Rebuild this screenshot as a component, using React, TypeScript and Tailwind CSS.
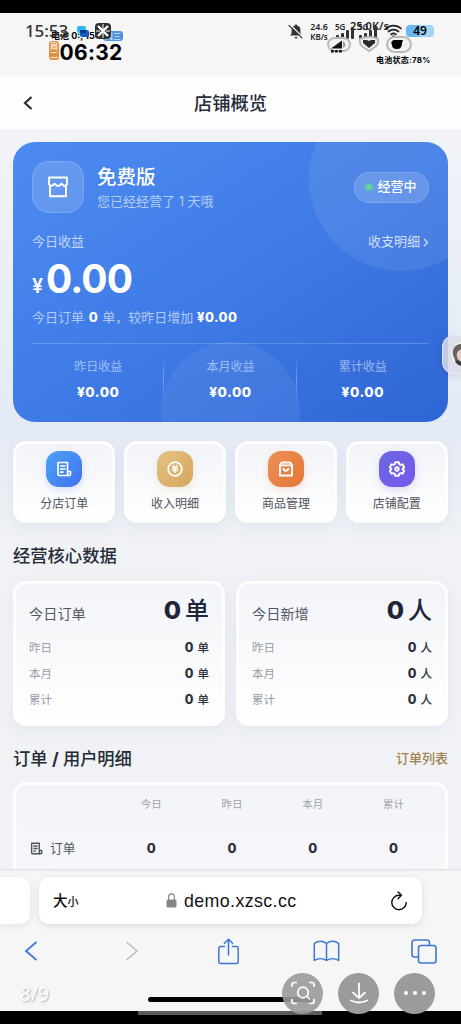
import React from "react";

const SOFT_CARD =
  "rounded-[13px] border-[3px] border-white/80 bg-gradient-to-b from-[#f2f4f8] to-white shadow-[0_4px_14px_rgba(120,140,190,0.10)]";

const NUMERAL = "font-extrabold";

function ReceiptIcon({ size }: { size: number }) {
  return (
    <svg width={size} height={size} viewBox="0 0 16 16" fill="none" stroke="currentColor" strokeWidth="1.7" strokeLinejoin="round">
      <path d="M2 1.500h9.500v13H3.200A1.200 1.200 0 0 1 2 13.300z" />
      <path d="M11.500 10.500h3v2.600a1.400 1.400 0 0 1-1.400 1.400H11" />
      <path d="M4 5h5.500M4 8h5.500M4 11.200h3.500" />
    </svg>
  );
}

function CoinIcon() {
  return (
    <svg width="16" height="16" viewBox="0 0 16 16" fill="none" stroke="currentColor" strokeWidth="1.700">
      <circle cx="8" cy="8" r="6.800" />
      <path d="M5.700 4.300L8 6.800l2.300-2.500M8 6.500v5.500M5 7.300h6M5 9.500h6" strokeWidth="1.500" />
    </svg>
  );
}

function BagIcon() {
  return (
    <svg width="16" height="16" viewBox="0 0 16 16" fill="none" stroke="currentColor" strokeWidth="1.900" strokeLinejoin="round">
      <path d="M3.800 1.500h8.400l1.800 2.500v10.500H2V4z" />
      <path d="M2.500 4.400h11M5.500 7a2.500 2.800 0 0 0 5 0" />
    </svg>
  );
}

function GearIcon() {
  return (
    <svg width="16" height="16" viewBox="0 0 16 16" fill="none" stroke="currentColor" strokeWidth="1.900" strokeLinejoin="round">
      <path d="M6.200 1.200h3.600l.5 2 1.200.7 2-.6 1.700 3-1.500 1.400v.6l1.500 1.400-1.700 3-2-.6-1.200.7-.5 2H6.200l-.5-2-1.200-.7-2 .6-1.700-3 1.500-1.400v-.6L.8 6.300l1.700-3 2 .6 1.200-.7z" />
      <circle cx="8" cy="8" r="1.700" />
    </svg>
  );
}

function StoreIcon() {
  return (
    <svg width="20" height="22" viewBox="0 0 20 22" fill="none" stroke="white" strokeWidth="1.900" strokeLinejoin="round">
      <path d="M1 1.500h18v6.800l-1.500 1.400h-2l-2-2-2 2h-3l-2-2-2 2h-2L1 8.300z" />
      <path d="M2 9.700v10.500h16V9.700" />
    </svg>
  );
}

function Signal() {
  return (
    <svg width="19" height="12" viewBox="0 0 19 12" fill="#333">
      <rect x="1" y="8" width="3" height="4" rx="1" />
      <rect x="6" y="6" width="3" height="6" rx="1" />
      <rect x="11" y="3" width="3" height="9" rx="1" />
      <rect x="16" y="0" width="3" height="12" rx="1" />
    </svg>
  );
}

function StatusBar() {
  return (
    <header className="relative h-[64px] shrink-0 bg-[#f6f6f7] text-black">
      <span className="absolute left-[51px] top-[17px] whitespace-nowrap text-[9px] font-bold leading-3">电池 0:, 15:</span>
      <span className="absolute left-[103px] top-[18px] flex h-[10px] w-[20px] items-center justify-center rounded-[3px] bg-[#4b93dc] text-[8px] text-white">周三</span>
      <span className="absolute left-[25px] top-[8px] font-['Noto_Sans','Noto_Sans_CJK_SC',sans-serif] text-[17px] font-medium leading-5 tracking-[-0.1px] text-[#333]">15:53</span>
      <svg className="absolute left-[77px] top-[13px]" width="12" height="12" viewBox="0 0 12 12">
        <rect x="0" y="0" width="9" height="7" rx="2" fill="#2db5f2" />
        <rect x="3" y="4" width="9" height="7" rx="2" fill="#1459c8" />
        <path d="M3 4h6v3H5a2 2 0 0 1-2-2z" fill="#083985" />
      </svg>
      <svg className="absolute left-[95px] top-[10px]" width="16" height="16" viewBox="0 0 16 16">
        <rect width="16" height="16" rx="4" fill="#303030" />
        <path d="M3 3l10 10M13 3L3 13" stroke="#fff" strokeWidth="2.400" />
        <path d="M8 1v5M8 15v-5M1 8h4M15 8h-4" stroke="#fff" strokeWidth="1" />
      </svg>
      <span className="absolute left-[49px] top-[28px] flex h-[19px] w-[10px] flex-col items-center justify-center rounded-[3px] bg-[#de9145] text-[8px] leading-[9px] text-white">
        <span>周</span>
        <span>二</span>
      </span>
      <span className="absolute left-[59.500px] top-[28px] text-[21px] font-bold leading-6 tracking-[0.300px]">06:32</span>

      <svg className="absolute left-[288px] top-[10px]" width="16" height="17" viewBox="0 0 16 17">
        <path d="M2 12.500l1.600-2V7a4.500 4.500 0 0 1 3.200-4.400 1.200 1.200 0 0 1 2.400 0A4.500 4.500 0 0 1 12.400 7v3.500l1.600 2zM6.500 14h3a1.500 1.500 0 0 1-3 0z" fill="#333" />
        <path d="M1.800 1.200l13 13" stroke="#f6f6f7" strokeWidth="1.300" />
        <path d="M.6 2.100l13.600 13" stroke="#333" strokeWidth="1.300" />
      </svg>
      <span className="absolute left-[308px] top-[10px] w-[22px] text-center font-['Noto_Sans',sans-serif] text-[8.800px] font-semibold leading-[9px] text-[#222]">
        24.6
        <br />
        <span className="text-[8px]">KB/s</span>
      </span>
      <span className="absolute left-[335px] top-[9px] font-['Noto_Sans',sans-serif] text-[8px] font-semibold leading-[10px] text-[#222]">5G</span>
      <span className="absolute left-[358px] top-[9px] font-['Noto_Sans',sans-serif] text-[8px] font-semibold leading-[10px] text-[#222]">5G</span>
      <span className="absolute left-[350px] top-[7px] whitespace-nowrap font-['Noto_Sans',sans-serif] text-[11px] font-semibold leading-3 text-[#222]">25.0K/s</span>
      <span className="absolute left-[335px] top-[14px]"><Signal /></span>
      <span className="absolute left-[358px] top-[14px]"><Signal /></span>
      <svg className="absolute left-[384px] top-[11px]" width="19" height="15" viewBox="0 0 19 15" fill="none" stroke="#222" strokeWidth="1.700" strokeLinecap="round">
        <path d="M2 4.500a11 11 0 0 1 15 0M4.500 7.500a7.500 7.500 0 0 1 10 0M7 10.300a4 4 0 0 1 5 0" />
        <circle cx="9.500" cy="13" r="0.800" fill="#222" />
      </svg>
      <svg className="absolute left-[326px] top-[21px]" width="88" height="20" viewBox="0 0 88 20">
        <g fill="#f1f1f1" stroke="#b9b9b9" strokeWidth="2">
          <rect x="2" y="4" width="22" height="13" rx="6.500" />
          <path d="M34 5q9-4 18 0 1 5-3 8l-6 4-6-4q-4-3-3-8z" />
          <rect x="61" y="3" width="24" height="15" rx="7.500" />
        </g>
        <path d="M5 14.500L16 6.500v8z" fill="#111" />
        <path d="M17 7q5 4 0 7z" fill="#999" />
        <path d="M5 16h2.800v2.500H5zM9 16h2.800v2.500H9zM13 16h2.800v2.500H13z" fill="#111" />
        <path d="M37 6h4l2 1 2-1h4v3l-6 5-6-5z" fill="#2a2a2a" />
        <path d="M66 11q-2-4 2-5h9l-1 3q0 6-5 6-5 0-5-4z" fill="#000" />
      </svg>
      <span className="absolute left-[406px] top-[12px] flex h-[12px] w-[28px] items-center justify-center rounded-[4px] bg-gradient-to-r from-[#69b9ef] from-50% to-[#a5d3f2] to-50% font-['Noto_Sans',sans-serif] text-[12px] font-semibold">49</span>
      <span className="absolute left-[376px] top-[41px] whitespace-nowrap text-[8px] font-bold leading-3 tracking-[0.250px]">电池状态:78%</span>
    </header>
  );
}

const earnings = ["昨日收益", "本月收益", "累计收益"];

function EarningsCard() {
  return (
    <section className="relative h-[280px] shrink-0 overflow-hidden rounded-[22px] bg-gradient-to-br from-[#4d8bf0] via-[#3f7be6] to-[#2f65d5] px-[19px] pt-[19px] text-white">
      <div className="absolute left-[296px] top-[-55px] h-[184px] w-[184px] rounded-full bg-white/8" />
      <div className="absolute left-[148px] top-[200px] h-[139px] w-[139px] rounded-full bg-white/6" />
      <div className="relative">
        <div className="flex h-[52px] items-center">
          <div className="flex h-[52px] w-[52px] items-center justify-center rounded-[17px] border border-white/15 bg-white/15">
            <StoreIcon />
          </div>
          <div className="ml-[13px] flex-1">
            <div className="h-[28px] text-[19.500px] font-medium leading-[28px]">免费版</div>
            <div className="h-[21px] text-[13px] leading-[21px] text-white/60">您已经经营了 1 天哦</div>
          </div>
          <div className="flex h-[31px] w-[75px] items-center justify-center gap-[5px] rounded-full border border-white/15 bg-white/15 text-[13px] font-medium">
            <span className="h-[6px] w-[6px] rounded-full bg-[#63d6a0] shadow-[0_0_4px_#4ade80]" />
            经营中
          </div>
        </div>
        <div className="mt-[19px] flex h-[20px] items-center justify-between text-[13px]">
          <span className="text-white/65">今日收益</span>
          <span className="flex items-center gap-[3px] text-white/75">
            收支明细
            <svg width="6" height="9" viewBox="0 0 6 9" fill="none" stroke="currentColor" strokeWidth="1.300"><path d="M1 1l3.500 3.500L1 8" /></svg>
          </span>
        </div>
        <div className="mt-[6px] flex h-[42px] items-baseline font-bold leading-[42px]">
          <span className="w-[14px] text-[19.500px] font-semibold">¥</span>
          <span className="text-[39px] tracking-[-0.900px]">0.00</span>
        </div>
        <div className="mt-[7px] h-[20px] whitespace-nowrap text-[13px] leading-[20px] text-white/60">
          今日订单 <b className={`${NUMERAL} mx-px text-[13px] text-white`}>0</b> 单，较昨日增加 <b className={`${NUMERAL} text-[13px] tracking-[0.400px] text-white`}>¥0.00</b>
        </div>
        <div className="mt-[16px] h-px bg-white/20" />
        <div className="mt-[12px] grid grid-cols-3">
          {earnings.map((label, i) => (
            <div key={label} className="flex">
              <div className="flex-1 text-center">
                <div className="h-[22px] text-[12px] leading-[22px] text-white/50">{label}</div>
                <div className={`${NUMERAL} mt-[3px] h-[22px] text-[13.500px] leading-[22px] tracking-[0.550px]`}>¥0.00</div>
              </div>
              {i < 2 && <div className="-ml-px h-[47px] w-px bg-gradient-to-b from-transparent via-white/30 to-transparent" />}
            </div>
          ))}
        </div>
      </div>
    </section>
  );
}

const shortcuts = [
  { label: "分店订单", icon: <ReceiptIcon size={16} />, color: "bg-gradient-to-br from-[#4ba3f5] to-[#4470ee] shadow-[0_3px_8px_rgba(70,120,240,0.2)]" },
  { label: "收入明细", icon: <CoinIcon />, color: "bg-gradient-to-br from-[#e5c283] to-[#d4a65a] shadow-[0_3px_8px_rgba(215,170,90,0.2)]" },
  { label: "商品管理", icon: <BagIcon />, color: "bg-gradient-to-br from-[#ec9057] to-[#e57636] shadow-[0_3px_8px_rgba(230,120,60,0.2)]" },
  { label: "店铺配置", icon: <GearIcon />, color: "bg-gradient-to-br from-[#6b66df] to-[#7759ef] shadow-[0_3px_8px_rgba(110,90,230,0.2)]" },
];

function Shortcuts() {
  return (
    <nav className="mt-[19px] grid shrink-0 grid-cols-4 gap-[8.500px]">
      {shortcuts.map((s) => (
        <div key={s.label} className={`${SOFT_CARD} flex h-[82px] flex-col items-center pt-[7px]`}>
          <div className={`${s.color} flex h-[36px] w-[36px] items-center justify-center rounded-[13px] text-white`}>{s.icon}</div>
          <div className="mt-[7px] text-[12px] leading-[20px] text-[#50545f]">{s.label}</div>
        </div>
      ))}
    </nav>
  );
}

function StatCard({ title, unit }: { title: string; unit: string }) {
  return (
    <div className={`${SOFT_CARD} h-[145px] px-[13px] pt-[9px]`}>
      <div className="flex h-[34px] items-baseline justify-between leading-[34px]">
        <span className="text-[14.200px] text-[#555966]">{title}</span>
        <span className="flex items-baseline gap-[4px] text-[#20263a]">
          <span className={`${NUMERAL} text-[25px]`}>0</span>
          <span className="text-[24px] font-medium">{unit}</span>
        </span>
      </div>
      <div className="mt-[9px]">
        {["昨日", "本月", "累计"].map((period) => (
          <div key={period} className="flex h-[26px] items-center justify-between text-[11.500px]">
            <span className="text-[#9a9da5]">{period}</span>
            <span className="flex items-baseline gap-[4px] text-[#2c303b]">
              <span className={`${NUMERAL} text-[12.500px]`}>0</span>
              <span className="font-medium">{unit}</span>
            </span>
          </div>
        ))}
      </div>
    </div>
  );
}

function DetailTable() {
  return (
    <section className="mt-[10px] h-[140px] shrink-0 rounded-[13px] border-[3px] border-white/80 bg-gradient-to-b from-[#f2f4f8] to-[#f7f9fb] pl-[14px] pr-[11px]">
      <div className="grid h-[41px] grid-cols-5 items-center border-b border-[#f0f2f6] text-center text-[10.500px] text-[#a0a3aa]">
        <span />
        <span>今日</span>
        <span>昨日</span>
        <span>本月</span>
        <span>累计</span>
      </div>
      <div className={`${NUMERAL} grid h-[47px] grid-cols-5 items-center text-center text-[13px] text-[#2c303b]`}>
        <span className="flex items-center gap-[7px] text-[12.700px] font-normal text-[#50545f]">
          <ReceiptIcon size={13} />
          订单
        </span>
        <span>0</span>
        <span>0</span>
        <span>0</span>
        <span>0</span>
      </div>
    </section>
  );
}

function BrowserBar() {
  return (
    <footer className="flex h-[142px] shrink-0 flex-col border-t-2 border-[#e6e7ea] bg-[#f6f6f7] text-[#3f78d2]">
      <div className="mt-[6px] flex h-[47px] shrink-0 gap-[9px]">
        <div className="w-[30px] rounded-r-[10px] bg-white shadow-[0_2px_8px_rgba(0,0,0,0.08)]" />
        <div className="flex w-[383px] items-center rounded-[10px] bg-white pl-[14px] pr-[14px] text-[#111] shadow-[0_2px_8px_rgba(0,0,0,0.10)]">
          <span className="flex w-[113px] items-baseline font-medium">
            <span className="text-[14.500px]">大</span>
            <span className="text-[11px]">小</span>
          </span>
          <svg width="11" height="15" viewBox="0 0 11 15">
            <rect x="0.500" y="6.500" width="10" height="8" rx="1.500" fill="#858588" />
            <path d="M2.600 7V4a2.900 3.200 0 0 1 5.800 0v3" fill="none" stroke="#858588" strokeWidth="1.200" />
          </svg>
          <span className="ml-[7px] flex-1 whitespace-nowrap pt-[2px] font-['Liberation_Sans',sans-serif] text-[17.800px] tracking-[0.400px]">demo.xzsc.cc</span>
          <svg width="18" height="20" viewBox="0 0 18 20" fill="none" stroke="#111" strokeWidth="1.400" strokeLinecap="round" strokeLinejoin="round">
            <path d="M11 4.300H9A7.200 7.200 0 1 0 16.200 11.500" />
            <path d="M8 0.900L11.500 4.300 8 7.700" />
          </svg>
        </div>
      </div>
      <div className="mt-[11px] flex h-[32px] shrink-0 items-center pl-[24px]">
        <svg width="14" height="20" viewBox="0 0 14 20" fill="none" stroke="currentColor" strokeWidth="1.800"><path d="M12.500 1L2 10l10.500 9" /></svg>
        <svg className="ml-[87px]" width="14" height="20" viewBox="0 0 14 20" fill="none" stroke="#bdbdbf" strokeWidth="1.500"><path d="M1.500 1L12 10 1.500 19" /></svg>
        <svg className="ml-[78px]" width="23" height="27" viewBox="0 0 22 27" fill="none" stroke="currentColor" strokeWidth="1.500" strokeLinecap="round" strokeLinejoin="round">
          <path d="M7 8.500H3a1.700 1.700 0 0 0-1.700 1.700v13.500A1.700 1.700 0 0 0 3 25.400h16a1.700 1.700 0 0 0 1.700-1.700V10.200A1.700 1.700 0 0 0 19 8.500h-4" />
          <path d="M11 17V1.500M6.800 5.500L11 1.300l4.200 4.200" />
        </svg>
        <svg className="ml-[73px]" width="27" height="22" viewBox="0 0 27 22" fill="none" stroke="currentColor" strokeWidth="1.500" strokeLinejoin="round">
          <path d="M13.500 3.500v17M13.500 3.500C10 .5 5 .5 1.300 3.500v17c3.700-2.500 8.700-2.500 12.200 0 3.500-2.500 8.500-2.500 12.200 0v-17C22 .5 17 .5 13.500 3.500z" />
        </svg>
        <svg className="ml-[71px]" width="26" height="25" viewBox="0 0 26 25" fill="none" stroke="currentColor" strokeWidth="1.600" strokeLinejoin="round">
          <rect x="7.500" y="6.500" width="17.500" height="17.500" rx="2.500" />
          <path d="M7 18H3.500A2.500 2.500 0 0 1 1 15.500v-12A2.500 2.500 0 0 1 3.500 1h12.500a2.500 2.500 0 0 1 2.500 2.500v2.500" />
        </svg>
      </div>
    </footer>
  );
}

function ViewerOverlay() {
  return (
    <>
      <span className="absolute left-[20px] top-[983px] font-['Noto_Sans',sans-serif] text-[19px] leading-[22px] text-white [text-shadow:1px_1px_2px_rgba(0,0,0,0.3)]">8/9</span>
      <div className="absolute left-[148px] top-[997px] h-[5px] w-[164px] rounded-full bg-black" />
      <div className="absolute left-[138px] top-[1011px] h-[4px] w-[184px] bg-[#5b5b5b]" />
      <div className="absolute left-[282px] top-[972.500px] flex gap-[15px] text-white">
        <div className="flex h-[41px] w-[41px] items-center justify-center rounded-full bg-[#9b9b9b]/90">
          <svg width="24" height="24" viewBox="0 0 24 24" fill="none" stroke="currentColor" strokeWidth="1.700">
            <path d="M1 6V3.500A2 2 0 0 1 3 1.500h3M18 1.500h3a2 2 0 0 1 2 2V6M23 18v2.500a2 2 0 0 1-2 2h-3M6 22.500H3a2 2 0 0 1-2-2V18" />
            <circle cx="12" cy="11.500" r="5.300" />
            <path d="M16 15.500l3 3" />
          </svg>
        </div>
        <div className="flex h-[41px] w-[41px] items-center justify-center rounded-full bg-[#9b9b9b]">
          <svg width="20" height="22" viewBox="0 0 20 22" fill="none" stroke="currentColor" strokeWidth="1.800" strokeLinecap="round" strokeLinejoin="round">
            <path d="M10 1.500V16M4 10.500l6 5.700 6-5.700M2 18.500q8 4 16 0" />
          </svg>
        </div>
        <div className="flex h-[41px] w-[41px] items-center justify-center gap-[5px] rounded-full bg-[#9b9b9b]">
          <i className="h-[4px] w-[4px] rounded-full bg-white" />
          <i className="h-[4px] w-[4px] rounded-full bg-white" />
          <i className="h-[4px] w-[4px] rounded-full bg-white" />
        </div>
      </div>
    </>
  );
}

function SupportButton() {
  return (
    <div className="absolute left-[442px] top-[335px] h-[39px] w-[19px] overflow-hidden rounded-l-[12px] border border-r-0 border-white/40 bg-[#d9dde8]/85 shadow-[0_2px_8px_rgba(0,0,0,0.12)]">
      <svg width="19" height="39" viewBox="0 0 19 39">
        <circle cx="21" cy="18" r="12.500" fill="#eee" />
        <path d="M19 8C12 8 9 13 10 19l2 5c1 3 4 5 7 4z" fill="#66605f" />
        <path d="M19 13c-4 1-6 4-5 8 1 3 3 5 5 5z" fill="#e8cbc3" />
        <path d="M12 25q4-2 7 2v3c-3 0-6-2-7-5z" fill="#3c3c40" />
      </svg>
    </div>
  );
}

export default function App() {
  return (
    <div className="relative flex h-[1024px] w-[461px] flex-col overflow-hidden bg-black pt-[13px] font-['Inter','Noto_Sans_CJK_SC',sans-serif]">
      <StatusBar />
      <div className="flex h-[52px] shrink-0 items-center bg-[#fdfdfe] px-[23px] text-[#262b38]">
        <svg className="w-[10px] shrink-0" width="10" height="14" viewBox="0 0 10 14" fill="none" stroke="currentColor" strokeWidth="2.200"><path d="M8.500 1L2 7l6.500 6" /></svg>
        <h1 className="flex-1 pr-[10px] pt-[2px] text-center text-[18.300px] font-medium">店铺概览</h1>
      </div>
      <main className="flex h-[740px] shrink-0 flex-col overflow-hidden bg-gradient-to-b from-[#f2f3f7] via-[#e4eaf5] via-40% to-[#f0f2f5] to-56% px-[13px] pt-[13px]">
        <EarningsCard />
        <Shortcuts />
        <h2 className="mt-[20px] h-[26px] shrink-0 text-[17.300px] font-medium leading-[26px] text-[#262b38]">经营核心数据</h2>
        <section className="mt-[11.500px] grid shrink-0 grid-cols-2 gap-[11px]">
          <StatCard title="今日订单" unit="单" />
          <StatCard title="今日新增" unit="人" />
        </section>
        <div className="mt-[20px] flex h-[26px] shrink-0 items-center justify-between">
          <h2 className="text-[17.300px] font-medium leading-[26px] tracking-[-0.100px] text-[#262b38]">订单 <b>/</b> 用户明细</h2>
          <span className="text-[13px] font-medium text-[#a1834f]">订单列表</span>
        </div>
        <DetailTable />
      </main>
      <BrowserBar />
      <SupportButton />
      <ViewerOverlay />
    </div>
  );
}
